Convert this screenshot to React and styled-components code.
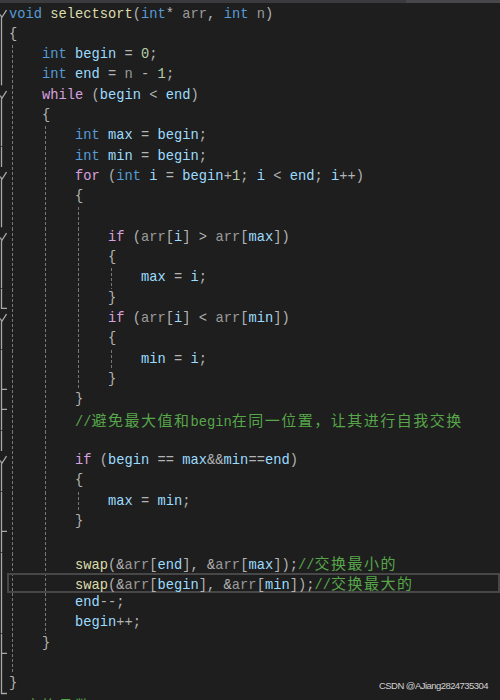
import React from "react";
import styled, { createGlobalStyle, css } from "styled-components";

const LINE = 20.3;
const INDENT = 33;

const GlobalStyle = createGlobalStyle`
  html, body {
    margin: 0;
    padding: 0;
    background: #1e1e1e;
  }
  body {
    width: 500px;
    height: 700px;
    overflow: hidden;
  }
`;

const Editor = styled.div`
  position: relative;
  width: 500px;
  height: 700px;
  overflow: hidden;
  background: #1e1e1e;
  font-family: "Liberation Mono", "DejaVu Sans Mono", monospace;
  font-size: 13.75px;
`;

const TopBar = styled.div`
  height: 3px;
  margin-bottom: 1.5px;
  background: linear-gradient(to right, #3b3b3d 406px, #48484a 406px);
`;

const Row = styled.div`
  display: flex;
  height: ${LINE}px;
`;

const Gutter = styled.svg`
  flex: 0 0 7px;
  width: 7px;
  height: ${LINE}px;
  stroke: #a9a9a9;
  stroke-width: 1.3;
  fill: none;
`;

const Code = styled.div`
  flex: 1;
  padding-left: 2px;
  line-height: ${LINE}px;
  white-space: pre;
  color: #dcdcdc;
  ${({ $guides }) =>
    $guides.length > 0 &&
    css`
      background-image: ${$guides
        .map(() => "linear-gradient(#787878 60%, transparent 60%)")
        .join(", ")};
      background-size: 1px 5px;
      background-position: ${$guides.map((g) => `${5 + g * INDENT}px 0`).join(", ")};
      background-repeat: repeat-y;
    `}
  box-shadow: ${({ $current }) => ($current ? "inset 0 0 0 2px #474747" : "none")};
`;

const colors = {
  k: "#569cd6",
  c: "#d8a0df",
  v: "#9cdcfe",
  p: "#9a9a9a",
  f: "#dcdcaa",
  n: "#b5cea8",
  o: "#b4b4b4",
  m: "#57a64a",
};

const Tok = styled.span`
  color: ${({ $kind }) => colors[$kind]};
`;

const Cjk = styled.span`
  font-family: "Noto Sans CJK SC", "Noto Sans CJK JP", sans-serif;
  font-size: 15px;
  letter-spacing: 1.5px;
`;

const Watermark = styled.div`
  position: absolute;
  right: 12px;
  bottom: 9px;
  font-family: "Liberation Sans", Arial, sans-serif;
  font-size: 9.5px;
  letter-spacing: -0.55px;
  color: rgba(236, 236, 236, 0.88);
`;

// [indent, tokens]
const lines = [
  [0, [["k", "void"], ["o", " "], ["f", "selectsort"], ["o", "("], ["k", "int"], ["o", "* "], ["p", "arr"], ["o", ", "], ["k", "int"], ["o", " "], ["p", "n"], ["o", ")"]]],
  [0, [["o", "{"]]],
  [4, [["k", "int"], ["o", " "], ["v", "begin"], ["o", " = "], ["n", "0"], ["o", ";"]]],
  [4, [["k", "int"], ["o", " "], ["v", "end"], ["o", " = "], ["p", "n"], ["o", " - "], ["n", "1"], ["o", ";"]]],
  [4, [["c", "while"], ["o", " ("], ["v", "begin"], ["o", " < "], ["v", "end"], ["o", ")"]]],
  [4, [["o", "{"]]],
  [8, [["k", "int"], ["o", " "], ["v", "max"], ["o", " = "], ["v", "begin"], ["o", ";"]]],
  [8, [["k", "int"], ["o", " "], ["v", "min"], ["o", " = "], ["v", "begin"], ["o", ";"]]],
  [8, [["c", "for"], ["o", " ("], ["k", "int"], ["o", " "], ["v", "i"], ["o", " = "], ["v", "begin"], ["o", "+"], ["n", "1"], ["o", "; "], ["v", "i"], ["o", " < "], ["v", "end"], ["o", "; "], ["v", "i"], ["o", "++)"]]],
  [8, [["o", "{"]]],
  [0, []],
  [12, [["c", "if"], ["o", " ("], ["p", "arr"], ["o", "["], ["v", "i"], ["o", "] > "], ["p", "arr"], ["o", "["], ["v", "max"], ["o", "])"]]],
  [12, [["o", "{"]]],
  [16, [["v", "max"], ["o", " = "], ["v", "i"], ["o", ";"]]],
  [12, [["o", "}"]]],
  [12, [["c", "if"], ["o", " ("], ["p", "arr"], ["o", "["], ["v", "i"], ["o", "] < "], ["p", "arr"], ["o", "["], ["v", "min"], ["o", "])"]]],
  [12, [["o", "{"]]],
  [16, [["v", "min"], ["o", " = "], ["v", "i"], ["o", ";"]]],
  [12, [["o", "}"]]],
  [8, [["o", "}"]]],
  [8, [["m", "//避免最大值和begin在同一位置，让其进行自我交换"]]],
  [0, []],
  [8, [["c", "if"], ["o", " ("], ["v", "begin"], ["o", " == "], ["v", "max"], ["o", "&&"], ["v", "min"], ["o", "=="], ["v", "end"], ["o", ")"]]],
  [8, [["o", "{"]]],
  [12, [["v", "max"], ["o", " = "], ["v", "min"], ["o", ";"]]],
  [8, [["o", "}"]]],
  [0, []],
  [8, [["f", "swap"], ["o", "(&"], ["p", "arr"], ["o", "["], ["v", "end"], ["o", "], &"], ["p", "arr"], ["o", "["], ["v", "max"], ["o", "]);"], ["m", "//交换最小的"]]],
  [8, [["f", "swap"], ["o", "(&"], ["p", "arr"], ["o", "["], ["v", "begin"], ["o", "], &"], ["p", "arr"], ["o", "["], ["v", "min"], ["o", "]);"], ["m", "//交换最大的"]]],
  [8, [["v", "end"], ["o", "--;"]]],
  [8, [["v", "begin"], ["o", "++;"]]],
  [4, [["o", "}"]]],
  [0, []],
  [0, [["o", "}"]]],
  [0, [["m", "//交换函数"]]],
];

const blocks = [
  [0, 33],
  [4, 31],
  [8, 19],
  [11, 14],
  [15, 18],
  [22, 25],
];

const guideRanges = [
  [0, 2, 32],
  [1, 6, 30],
  [2, 10, 18],
  [2, 24, 24],
  [3, 13, 13],
  [3, 17, 17],
];

const CURRENT = 28;

function guidesFor(i) {
  return guideRanges.filter(([, a, b]) => i >= a && i <= b).map(([lvl]) => lvl);
}

function markFor(i) {
  if (blocks.some(([s]) => s === i)) return i === 0 ? "first" : "start";
  if (blocks.some(([, e]) => e === i)) return "end";
  if (i > 0 && i < 33) return "mid";
  return null;
}

function Fold({ mark }) {
  const h = LINE;
  return (
    <Gutter viewBox={`0 0 7 ${h}`}>
      {mark === "mid" && <line x1="1.5" y1="0" x2="1.5" y2={h} />}
      {mark === "end" && <polyline points={`1.5,0 1.5,${h - 0.8} 7,${h - 0.8}`} />}
      {(mark === "start" || mark === "first") && (
        <>
          <polyline points="0.3,9.5 1.8,12.5 6.5,5" />
          <line x1="1.5" y1="12.5" x2="1.5" y2={h} />
        </>
      )}
    </Gutter>
  );
}

function Comment({ text }) {
  const parts = text.split(/([\u3000-\u9fff\uff00-\uffef]+)/);
  return (
    <Tok $kind="m">
      {parts.map((p, i) => (i % 2 === 1 ? <Cjk key={i}>{p}</Cjk> : p))}
    </Tok>
  );
}

function CodeLine({ index, indent, tokens }) {
  return (
    <Row>
      <Fold mark={markFor(index)} />
      <Code $guides={guidesFor(index)} $current={index === CURRENT}>
        {" ".repeat(indent)}
        {tokens.map(([kind, text], i) =>
          kind === "m" ? <Comment key={i} text={text} /> : <Tok key={i} $kind={kind}>{text}</Tok>
        )}
      </Code>
    </Row>
  );
}

export default function App() {
  return (
    <>
      <GlobalStyle />
      <Editor>
        <TopBar />
        {lines.map(([indent, tokens], i) => (
          <CodeLine key={i} index={i} indent={indent} tokens={tokens} />
        ))}
        <Watermark>CSDN @AJiang2824735304</Watermark>
      </Editor>
    </>
  );
}
